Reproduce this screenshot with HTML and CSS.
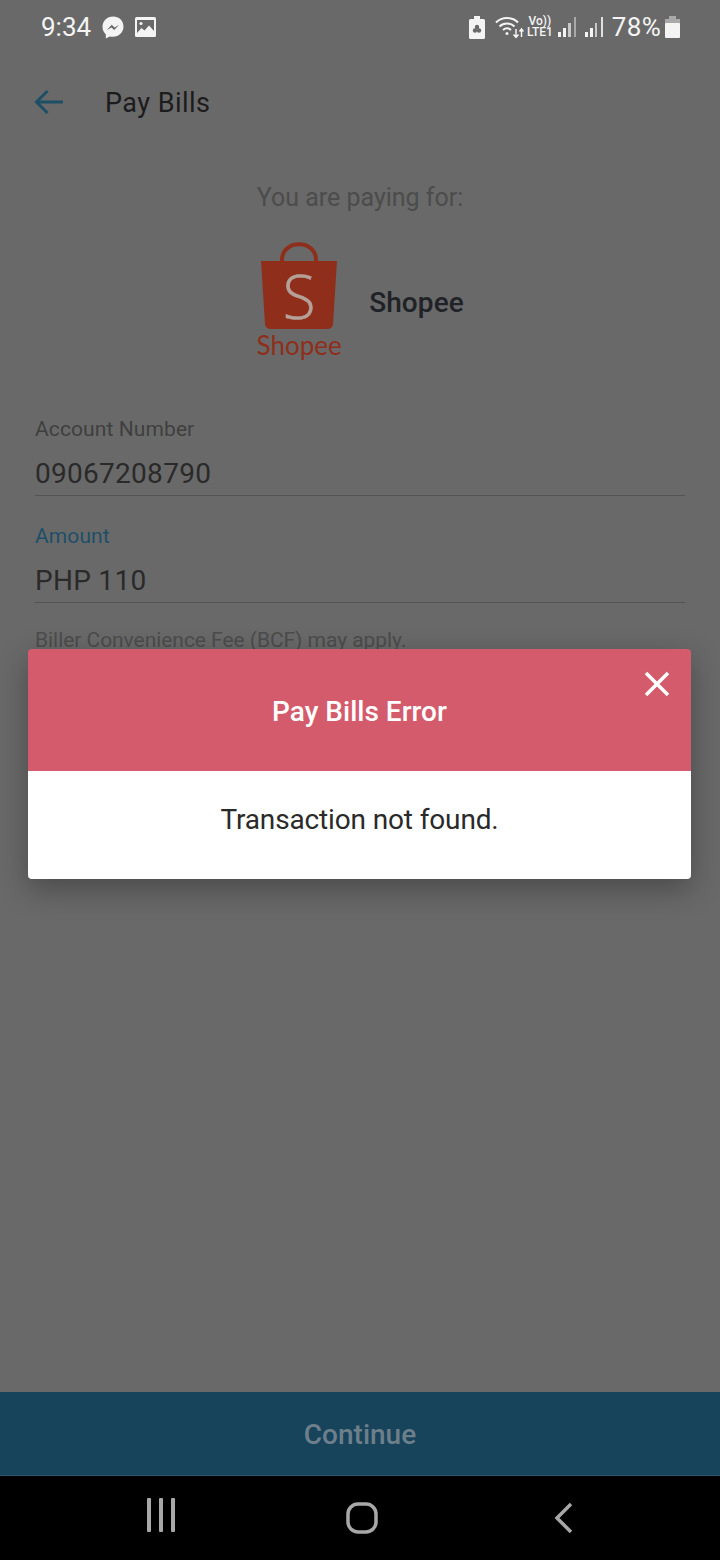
FILE: index.html
```html
<!DOCTYPE html>
<html>
<head>
<meta charset="utf-8"/>
<title>Pay Bills</title>
<link rel="stylesheet" href="styles.css">
</head>
<body>
<div class="screen">

  <div class="statusbar">
    <div class="status-left">
      <span class="clock">9:34</span>
      <!-- messenger -->
      <svg class="ic-msg" width="22" height="23" viewBox="0 0 22 23">
        <path d="M11 0.5C5 0.5 0.5 4.9 0.5 10.8c0 3.1 1.2 5.7 3.3 7.5v4.2l3.9-2.1c1 .3 2.1.4 3.3.4 6 0 10.5-4.4 10.5-10.3S17 0.5 11 0.5z" fill="#f4f4f4"/>
        <path d="M4.8 14l5-5.2 2.7 2.6 4.7-2.6-5 5.300-2.700-2.700z" fill="#696969"/>
      </svg>
      <!-- gallery notification -->
      <svg class="ic-img" width="21" height="20" viewBox="0 0 21 20">
        <rect width="21" height="20" rx="1.500" fill="#f4f4f4"/>
        <rect x="2" y="3" width="17" height="13" fill="#696969"/>
        <circle cx="6" cy="6.500" r="1.600" fill="#f4f4f4"/>
        <path d="M2 16l4.500-5 3 2.500 4.500-5 5 5.500v2z" fill="#f4f4f4"/>
      </svg>
    </div>
    <div class="status-right">
      <svg class="ic-saver" width="16" height="23" viewBox="0 0 16 23">
        <path d="M5 0h6v3h3.500a1.500 1.500 0 0 1 1.500 1.500V21.500a1.500 1.500 0 0 1-1.500 1.500H1.500A1.500 1.500 0 0 1 0 21.500V4.500A1.500 1.500 0 0 1 1.500 3H5z" fill="#f4f4f4"/>
        <circle cx="6" cy="14.500" r="2.200" fill="#696969"/>
        <circle cx="10" cy="14.500" r="2.200" fill="#696969"/>
        <circle cx="8" cy="11" r="2.200" fill="#696969"/>
      </svg>
      <svg class="ic-wifi" width="29" height="24" viewBox="0 0 29 24" fill="none" stroke="#f4f4f4" stroke-width="2">
        <path d="M1 7.500C7 1.500 17 1.500 23 7.500"/>
        <path d="M4.500 11.500c4-4 11-4 15 0"/>
        <path d="M8 15c2.500-2.200 5.500-2.200 8 0"/>
        <circle cx="12" cy="18.500" r="1.500" fill="#f4f4f4" stroke="none"/>
        <path d="M21 14v8M18.500 19.500l2.500 2.800 2.500-2.800M26.500 22v-8M24.500 16.500l2-2.500 2 2.500" stroke-width="1.500"/>
      </svg>
      <div class="volte"><span>Vo))</span><span>LTE1</span></div>
      <svg class="ic-signal" width="19" height="22" viewBox="0 0 19 22">
        <rect x="0" y="16" width="3" height="5" fill="#f4f4f4"/>
        <rect x="5" y="12" width="3" height="9" fill="#f4f4f4"/>
        <rect x="10" y="7" width="3" height="14" fill="#c8c8c8"/>
        <rect x="16" y="1" width="2" height="20" fill="#a9a9a9"/>
      </svg>
      <svg class="ic-signal second" width="19" height="22" viewBox="0 0 19 22">
        <rect x="0" y="16" width="3" height="5" fill="#f4f4f4"/>
        <rect x="5" y="12" width="3" height="9" fill="#f4f4f4"/>
        <rect x="10" y="7" width="2" height="14" fill="#c8c8c8"/>
        <rect x="16" y="1" width="2" height="20" fill="#e0e0e0"/>
      </svg>
      <span class="battery-pct">78%</span>
      <svg class="ic-battery" width="15" height="23" viewBox="0 0 15 23">
        <rect x="4" y="0" width="7" height="3" fill="#a9a9a9"/>
        <rect x="0" y="3" width="15" height="5" fill="#a9a9a9"/>
        <rect x="0" y="7" width="15" height="15" rx="1" fill="#f4f4f4"/>
      </svg>
    </div>
  </div>

  <div class="toolbar">
    <svg class="back" width="30" height="26" viewBox="0 0 30 26" fill="none" stroke="#1d4f66" stroke-width="3">
      <path d="M29 13H3M13.500 2L2.500 13l11 11"/>
    </svg>
    <span class="toolbar-title">Pay Bills</span>
  </div>

  <div class="content">
    <p class="paying">You are paying for:</p>
    <div class="biller">
      <div class="logo">
        <div class="bag">
          <svg class="bag-shape" width="78" height="87" viewBox="0 0 78 87">
            <path d="M22 22V18C22 -3 56 -3 56 18V22" fill="none" stroke="#8f2e1b" stroke-width="4"/>
            <path d="M1 19H77L73 82a5 5 0 0 1-5 5H10a5 5 0 0 1-5-5z" fill="#8f2e1b"/>
          </svg>
          <span class="bag-s">S</span>
        </div>
        <span class="logo-word">Shopee</span>
      </div>
      <span class="biller-name">Shopee</span>
    </div>

    <div class="field">
      <label class="field-label">Account Number</label>
      <div class="field-value">09067208790</div>
    </div>
    <div class="field amount">
      <label class="field-label">Amount</label>
      <div class="field-value">PHP 110</div>
    </div>
    <p class="hint">Biller Convenience Fee (BCF) may apply.</p>
  </div>

  <div class="bottom">
    <div class="continue">Continue</div>
    <div class="navbar">
      <svg class="nav-recent" width="28" height="36" viewBox="0 0 28 36" fill="#a8a8a8">
        <rect x="0" y="1" width="4" height="34" rx="1"/>
        <rect x="12" y="1" width="4" height="34" rx="1"/>
        <rect x="24" y="1" width="4" height="34" rx="1"/>
      </svg>
      <svg class="nav-home" width="32" height="32" viewBox="0 0 32 32" fill="none" stroke="#a8a8a8" stroke-width="3.500">
        <rect x="2" y="2" width="28" height="28" rx="10"/>
      </svg>
      <svg width="20" height="32" viewBox="0 0 20 32" fill="none" stroke="#a8a8a8" stroke-width="3.500">
        <path d="M17 2L3 16l14 14"/>
      </svg>
    </div>
  </div>

  <div class="dialog">
    <div class="dialog-head">
      <span class="dialog-title">Pay Bills Error</span>
      <svg class="dialog-close" width="26" height="26" viewBox="0 0 26 26" stroke="#fff" stroke-width="3.500">
        <path d="M2 2l22 22M24 2L2 24"/>
      </svg>
    </div>
    <div class="dialog-body">Transaction not found.</div>
  </div>

</div>
</body>
</html>
```

FILE: styles.css
```css
html, body {
  margin: 0;
  padding: 0;
}

body {
  font-family: Roboto, sans-serif;
  background-color: #696969;
}

.screen {
  position: relative;
  display: flex;
  flex-direction: column;
  width: 720px;
  height: 1560px;
  overflow: hidden;
  background-color: #696969;
}

/* status bar */
.statusbar {
  display: flex;
  justify-content: space-between;
  align-items: center;
  height: 54px;
  padding: 0 40px 0 41px;
  color: #f4f4f4;
  font-size: 26px;
}

.status-left, .status-right {
  display: flex;
  align-items: center;
}

.ic-msg {
  margin-left: 11px;
}

.ic-img {
  margin-left: 11px;
}

.ic-wifi {
  margin-left: 10px;
}

.volte {
  display: flex;
  flex-direction: column;
  align-items: center;
  margin-left: 3px;
  font-size: 12px;
  font-weight: 500;
  line-height: 11px;
}

.ic-signal {
  margin-left: 5px;
}

.ic-signal.second {
  margin-left: 8px;
}

.battery-pct {
  margin-left: 8px;
  letter-spacing: 0.3px;
}

.ic-battery {
  margin-left: 4px;
}

/* toolbar */
.toolbar {
  display: flex;
  align-items: center;
  height: 96px;
  padding-left: 34px;
}

.toolbar-title {
  margin-left: 41px;
  margin-top: 2px;
  font-size: 27px;
  color: #1c1c1c;
  letter-spacing: 0.45px;
}

/* form */
.content {
  flex: 1;
  padding: 0 35px;
}

.paying {
  margin: 33px 0 0;
  font-size: 25px;
  line-height: 30px;
  text-align: center;
  color: #4c4c4c;
}

.biller {
  display: flex;
  align-items: center;
  justify-content: center;
  margin-top: 29px;
  padding-left: 7px;
}

.logo {
  display: flex;
  flex-direction: column;
  align-items: center;
  width: 86px;
}

.bag {
  position: relative;
  width: 78px;
  height: 87px;
}

.bag-shape {
  display: block;
}

.bag-s {
  position: absolute;
  left: 0;
  right: 0;
  top: 20px;
  font-family: "Open Sans", sans-serif;
  font-size: 60px;
  font-weight: 300;
  line-height: 68px;
  text-align: center;
  color: #b5a198;
  -webkit-text-stroke: 0.6px #b5a198;
}

.logo-word {
  margin-top: 1px;
  font-family: Lato, sans-serif;
  font-size: 26px;
  line-height: 30px;
  color: #8f2e1b;
}

.biller-name {
  margin: 2px 7px 0 27px;
  font-size: 28px;
  font-weight: 500;
  letter-spacing: 0.1px;
  color: #1f2226;
}

.field {
  margin-top: 55px;
  height: 80px;
  border-bottom: 1px solid #545454;
}

.field.amount {
  margin-top: 26px;
}

.field-label {
  display: block;
  font-size: 21px;
  line-height: 28px;
  color: #3f3f3f;
  letter-spacing: 0.1px;
}

.amount .field-label {
  color: #1d5068;
}

.field-value {
  margin-top: 14px;
  font-size: 28px;
  line-height: 34px;
  color: #2a2a2a;
  letter-spacing: 0.28px;
}

.hint {
  margin: 23px 0 0;
  font-size: 21px;
  line-height: 28px;
  letter-spacing: -0.05px;
  color: #4c4c4c;
}

/* bottom action and nav */
.continue {
  height: 83px;
  line-height: 86px;
  text-align: center;
  font-size: 28px;
  font-weight: 500;
  color: #6d7f8a;
  background-color: #17435b;
  border-bottom: 1px solid #2a5470;
}

.navbar {
  display: flex;
  justify-content: space-between;
  align-items: center;
  height: 84px;
  padding: 0 146px 0 147px;
  background-color: #000;
}

.nav-recent {
  margin-bottom: 6px;
}

.nav-home {
  margin-right: 5px;
}

/* error dialog */
.dialog {
  position: absolute;
  left: 28px;
  top: 649px;
  width: 663px;
  border-radius: 4px;
  overflow: hidden;
  box-shadow: 0 10px 30px rgba(0, 0, 0, 0.3);
}

.dialog-head {
  position: relative;
  height: 122px;
  line-height: 126px;
  text-align: center;
  background-color: #d45b6b;
}

.dialog-title {
  font-size: 28px;
  font-weight: 500;
  color: #fff;
}

.dialog-close {
  position: absolute;
  top: 22px;
  right: 21px;
}

.dialog-body {
  height: 108px;
  line-height: 98px;
  text-align: center;
  font-size: 28px;
  letter-spacing: -0.14px;
  color: #2a2a2a;
  background-color: #fff;
}
```
